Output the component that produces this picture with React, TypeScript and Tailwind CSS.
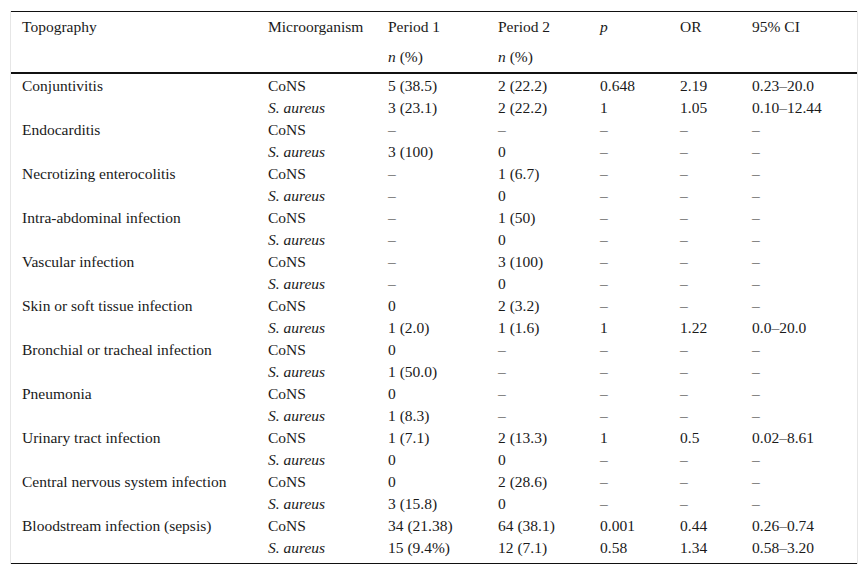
import React from "react";

type Row = [string, string, string, string, string, string, string];

const data: Row[] = [
  ["Conjuntivitis", "CoNS", "5 (38.5)", "2 (22.2)", "0.648", "2.19", "0.23–20.0"],
  ["", "S. aureus", "3 (23.1)", "2 (22.2)", "1", "1.05", "0.10–12.44"],
  ["Endocarditis", "CoNS", "–", "–", "–", "–", "–"],
  ["", "S. aureus", "3 (100)", "0", "–", "–", "–"],
  ["Necrotizing enterocolitis", "CoNS", "–", "1 (6.7)", "–", "–", "–"],
  ["", "S. aureus", "–", "0", "–", "–", "–"],
  ["Intra-abdominal infection", "CoNS", "–", "1 (50)", "–", "–", "–"],
  ["", "S. aureus", "–", "0", "–", "–", "–"],
  ["Vascular infection", "CoNS", "–", "3 (100)", "–", "–", "–"],
  ["", "S. aureus", "–", "0", "–", "–", "–"],
  ["Skin or soft tissue infection", "CoNS", "0", "2 (3.2)", "–", "–", "–"],
  ["", "S. aureus", "1 (2.0)", "1 (1.6)", "1", "1.22", "0.0–20.0"],
  ["Bronchial or tracheal infection", "CoNS", "0", "–", "–", "–", "–"],
  ["", "S. aureus", "1 (50.0)", "–", "–", "–", "–"],
  ["Pneumonia", "CoNS", "0", "–", "–", "–", "–"],
  ["", "S. aureus", "1 (8.3)", "–", "–", "–", "–"],
  ["Urinary tract infection", "CoNS", "1 (7.1)", "2 (13.3)", "1", "0.5", "0.02–8.61"],
  ["", "S. aureus", "0", "0", "–", "–", "–"],
  ["Central nervous system infection", "CoNS", "0", "2 (28.6)", "–", "–", "–"],
  ["", "S. aureus", "3 (15.8)", "0", "–", "–", "–"],
  ["Bloodstream infection (sepsis)", "CoNS", "34 (21.38)", "64 (38.1)", "0.001", "0.44", "0.26–0.74"],
  ["", "S. aureus", "15 (9.4%)", "12 (7.1)", "0.58", "1.34", "0.58–3.20"],
];

const grid = "grid grid-cols-[246px_120px_110px_102px_80px_72px_1fr] pl-[11px] whitespace-nowrap";

export default function App() {
  return (
    <div
      className="w-[868px] h-[575px] bg-white pt-[11px] pl-[10px] text-[15.5px] text-[#1a1a1a]"
      style={{ fontFamily: '"Liberation Serif", "Times New Roman", serif' }}
    >
      <div className="w-[848px] border-x border-[#e6e6e6]">
        <div className="border-t border-[#111]">
          <div className={`${grid} h-[30px] items-center`}>
            <div>Topography</div>
            <div>Microorganism</div>
            <div>Period 1</div>
            <div>Period 2</div>
            <div className="italic">p</div>
            <div>OR</div>
            <div>95% CI</div>
          </div>
          <div className={`${grid} h-[30px] items-center`}>
            <div></div>
            <div></div>
            <div><span className="italic">n</span> (%)</div>
            <div><span className="italic">n</span> (%)</div>
            <div></div>
            <div></div>
            <div></div>
          </div>
        </div>
        <div className="border-t-2 border-[#111] pb-[5px] border-b border-b-[#111]">
          {data.map((r, i) => (
            <div key={i} className={`${grid} h-[22px] pb-[2px] items-center`}>
              <div>{r[0]}</div>
              <div className={r[1] === "S. aureus" ? "italic" : ""}>{r[1]}</div>
              <div>{r[2]}</div>
              <div>{r[3]}</div>
              <div>{r[4]}</div>
              <div>{r[5]}</div>
              <div>{r[6]}</div>
            </div>
          ))}
        </div>
      </div>
    </div>
  );
}
